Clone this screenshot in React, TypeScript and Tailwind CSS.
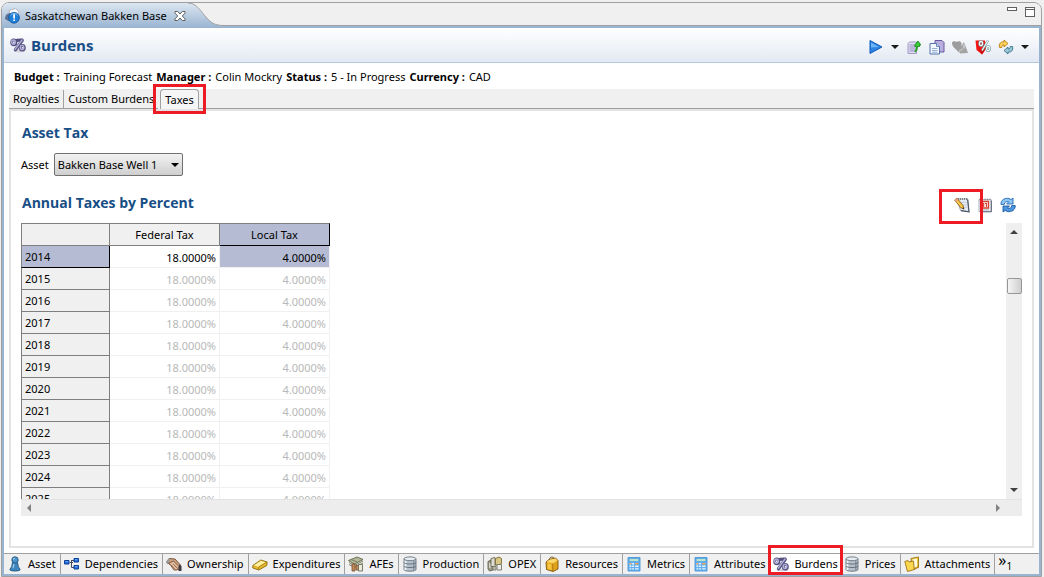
import type { ReactNode } from 'react';

function Svg({ children, className = '' }: { children: ReactNode; className?: string }) {
  return (
    <svg viewBox="0 0 16 16" className={`size-4 shrink-0 ${className}`} aria-hidden="true">
      {children}
    </svg>
  );
}

function PercentIcon() {
  return (
    <Svg>
      <ellipse cx="9.5" cy="14" rx="6" ry="1.5" fill="#d2d2dc" />
      <g fill="none" strokeLinecap="round" stroke="#55507f" strokeWidth="3.200">
        <ellipse cx="3.800" cy="5.400" rx="1.900" ry="2.200" />
        <ellipse cx="12.300" cy="10.800" rx="1.900" ry="2.200" />
        <path d="M12.300 3.300 5.400 12.800" />
        <path d="M7 3.400 11.500 3" />
      </g>
      <g fill="none" stroke="#b4b1dc" strokeWidth="1.400" strokeLinecap="round">
        <ellipse cx="3.500" cy="5.100" rx="1.800" ry="2.100" />
        <ellipse cx="12" cy="10.500" rx="1.800" ry="2.100" />
        <path d="M12 3 5.100 12.300" />
      </g>
      <path d="M3.800 4.600v1.700M12.300 10v1.600" stroke="#fff" strokeWidth="1.100" />
    </Svg>
  );
}

function AssetInfoIcon() {
  return (
    <Svg>
      <path d="M4 2.500 10.500.5l3 2.500v9.500l-7 1z" fill="#f7f8fb" stroke="#a8adba" strokeWidth=".8" />
      <path d="M0 11c0-4 2.500-6.500 6-5.500l1 5-3 3z" fill="#5d7396" />
      <circle cx="9" cy="9.800" r="5.400" fill="#1f7fd6" stroke="#0c56a5" strokeWidth=".8" />
      <path d="M5.500 7.400c1.500-2.500 5.500-2.500 7 0" fill="none" stroke="#7fc0f5" />
      <path d="M8.200 6.300h1.800v4.200h-1.800zM8.200 11.400h1.800v1.600h-1.800z" fill="#fff" />
    </Svg>
  );
}

function CloseIcon() {
  return (
    <Svg>
      <path
        d="M3 3.500h2.700L8 6l2.300-2.500H13v1.700L10.300 8l2.700 2.800v1.700h-2.700L8 10l-2.300 2.500H3v-1.700L5.700 8 3 5.200z"
        fill="#fff"
        stroke="#5f5f5f"
      />
    </Svg>
  );
}

function PlayIcon() {
  return (
    <Svg>
      <path d="M2 1.500 14 8 2 14.500z" fill="#2b83e6" stroke="#1159b4" strokeLinejoin="round" />
      <path d="M3 3.500 11 8 3 8.500z" fill="#6db4f7" />
    </Svg>
  );
}

function ImportIcon() {
  return (
    <Svg>
      <path d="M2 4.500 3.500 3h7v11.500H2z" fill="#e0dcf2" stroke="#9a92bd" strokeWidth=".9" />
      <path d="M3.500 6h5.500M3.500 8h5.500M3.500 10h5.500M3.500 12h5.500" stroke="#8f88bb" strokeWidth=".9" />
      <path d="M9.500 13c1.700-1.500 1.900-3 1.900-5.500h2.200v-1.500h1.200L12 2 8.800 6v1.500h1.500c0 2-.3 3.500-1.600 4.800z" fill="#35cc35" stroke="#128012" strokeWidth=".8" />
    </Svg>
  );
}

function CopyIcon() {
  return (
    <Svg>
      <path d="M6 1.500h7l2 2v9.500H6z" fill="#b9aedd" stroke="#66599f" />
      <path d="M1 4.500h6.500l3 3v7.500H1z" fill="#f4f8ff" stroke="#5573a8" />
      <path d="M7.500 4.500v3h3" fill="#c8d8f0" stroke="#5573a8" strokeWidth=".8" />
      <path d="M3 9.500h5.500M3 11.500h5.500M3 13.200h5.500" stroke="#7f9dcb" strokeWidth=".8" />
    </Svg>
  );
}

function DisabledIcon() {
  return (
    <Svg>
      <path d="M0 4C0 2 3 1.500 4.500 3 6 1.500 9 2 9.500 4v5L7.500 11 7.500 14 3.500 10C1 8 0 6 0 4z" fill="#9c9c9c" />
      <path d="M7.500 10 12 3l4 11-8 .5z" fill="#a3a3a3" />
      <path d="M12 5.500v4M8.500 11.500l2-1.500" stroke="#e5e5e5" />
    </Svg>
  );
}

function RedPercentIcon() {
  return (
    <Svg>
      <path d="M.5 1.500h9.500l1 8-4 6L1.500 11z" fill="#f41414" />
      <path d="M4 10.500 7 15.500l3.500-5z" fill="#d00c0c" />
      <g fill="none" stroke="#6d8f93" strokeWidth="2.300">
        <ellipse cx="6" cy="4.500" rx="1.600" ry="2.200" />
        <ellipse cx="13.200" cy="9.500" rx="1.600" ry="2.200" />
        <path d="M13 1.500 7 11.500" />
      </g>
      <g fill="none" stroke="#f1ffff" strokeWidth="1.200">
        <ellipse cx="6" cy="4.500" rx="1.600" ry="2.200" />
        <ellipse cx="13.200" cy="9.500" rx="1.600" ry="2.200" />
        <path d="M13 1.500 7 11.500" />
      </g>
    </Svg>
  );
}

function SyncIcon() {
  return (
    <Svg>
      <path d="M1.500 8.500c-1-4 1.500-6 4.500-5.500V1l4 3.500L6 8V6C4 5.800 3.500 7 3.800 8.500z" fill="#ffd35c" stroke="#b97f14" strokeWidth=".9" />
      <path d="M14.500 7.500c1 4-1.500 6-4.500 5.500v2l-4-3.500L10 8v2c2 .2 2.500-1 2.200-2.500z" fill="#9cc8d6" stroke="#36748c" strokeWidth=".9" />
    </Svg>
  );
}

function Caret() {
  return (
    <svg viewBox="0 0 8 4" className="h-1 w-2 shrink-0" aria-hidden="true">
      <path d="M0 0h8L4 4z" fill="#1c1c1c" />
    </svg>
  );
}

function EditIcon() {
  return (
    <Svg>
      <path d="M3 2 13.500 1.800 15 14.800 6.500 13.500z" fill="#e4eaf3" stroke="#8a93a1" strokeWidth=".8" />
      <path d="M13.700 2.500 15 14.800 7 13.700" fill="none" stroke="#4d5663" strokeWidth="1.200" />
      <path d="M4.500 1v2M6.500 1v2M8.500 1v2M10.500 1v2M12.500 1v2" stroke="#6e6e6e" strokeWidth=".8" />
      <path d="M7 5.500h5.500M8.500 8H13M10.500 10.500h3" stroke="#b8c4d6" strokeWidth=".7" />
      <path d="M.6 3 3 1.200l6.200 7.500.6 3.300-3-1.300z" fill="#f9bb30" stroke="#80540e" strokeWidth=".8" />
      <path d="M.6 3 3 1.200l1.200 1.500L1.800 4.500z" fill="#e79f9a" />
      <path d="m8.400 11.300 1.500.9-.3-1.900z" fill="#222" />
      <path d="m3 4.300 4.800 5.900" stroke="#fde28a" strokeWidth=".8" />
    </Svg>
  );
}

function CalendarIcon() {
  return (
    <Svg>
      <path d="M2 2.500h12v12H2z" fill="#eef2f8" stroke="#a0a7b2" strokeWidth=".9" />
      <path d="M14.400 3.500v11.300H3" fill="none" stroke="#5f6875" />
      <path d="M3 1.500v2M5.500 1.500v2M8 1.500v2M10.500 1.500v2M13 1.500v2" stroke="#888" strokeWidth=".8" />
      <path d="M4 4.500h7.500v6.500H4z" fill="#fff" stroke="#d6402c" strokeWidth="1.300" />
      <path d="M5.500 6.500h1.200V10M8 6.500h1.500V10" fill="none" stroke="#d6402c" strokeWidth="1.200" />
      <path d="M4 12.900h8" stroke="#aab6c8" />
    </Svg>
  );
}

function RefreshIcon() {
  return (
    <Svg>
      <path d="M1 7.500C.5 3.500 4.500.5 9 1.500l2 1.100L13 1v6H6.700l2-2.100C6.500 4 4.500 5 4.200 7.500z" fill="#8cc6f5" stroke="#2468b2" strokeWidth=".9" strokeLinejoin="round" />
      <path d="M15.200 8.500c.5 4-3.500 7-8 6l-2-1.100L3 15V9h6.500l-2 2.100c2.200.9 4-.1 4.300-2.600z" fill="#4d97de" stroke="#1d5ba5" strokeWidth=".9" strokeLinejoin="round" />
    </Svg>
  );
}

function PawnIcon() {
  return (
    <Svg>
      <path d="M5.500 6.500h5l.8 4 1.900 3.200c0 1.700-10.400 1.700-10.400 0l1.900-3.200z" fill="#3f86bd" stroke="#1d5682" strokeWidth=".9" />
      <circle cx="8" cy="4" r="3.200" fill="#4b93c9" stroke="#1d5682" strokeWidth=".9" />
      <path d="M6.300 3.500c.3-1 1-1.300 1.800-1.300M6 12l1-4" fill="none" stroke="#a9d3f0" strokeWidth="1.100" />
    </Svg>
  );
}

function DependencyIcon() {
  return (
    <Svg>
      <path d="M6 6.500h3M7.500 4v7.500M7.500 4.500H10M7.500 11.500H10" fill="none" stroke="#444d5c" />
      <path d="M.5 4.500h4.500v3.500H.5zM10 2.500h4.500v3.500H10zM10 9.500h4.500V13H10z" fill="#1f6bdc" stroke="#0d3f94" />
      <path d="M1.500 5.700h2.500M11 3.700h2.500M11 10.700h2.500" stroke="#74b0fa" />
    </Svg>
  );
}

function HandshakeIcon() {
  return (
    <Svg>
      <path d="m.5 6 3-3.500L9 3l5.500 6v4.500h-3z" fill="#caa07f" stroke="#6f4a33" strokeWidth=".9" />
      <path d="M3 7 7.500 5l5.500 5.500-2 3.500H8z" fill="#e2bd9f" stroke="#7c5238" strokeWidth=".9" />
      <path d="m5 9 4 4.500M7 7.800l4 4.200" stroke="#7c5238" strokeWidth=".8" />
      <path d="m13 8.500 2.500 1.500v5h-3z" fill="#3b3b42" />
      <path d="m0 6.500 1.500 2L4 4 2.500 2z" fill="#9a9a9a" />
    </Svg>
  );
}

function GoldIcon() {
  return (
    <Svg>
      <path d="m.8 9.500 8-5.500 6.400 2-.4 3.500-8 4.500L.8 12z" fill="#e3b62c" stroke="#8f6c10" strokeWidth=".9" strokeLinejoin="round" />
      <path d="m2 9.300 7-4.500 4.500 1.400-7.300 4.500z" fill="#fdf0a0" />
      <path d="m6.800 11 7.500-4.500" stroke="#a67e16" strokeWidth=".8" />
      <path d="M6.500 11v2.700" stroke="#a67e16" strokeWidth=".8" />
    </Svg>
  );
}

function MoneyIcon() {
  return (
    <Svg>
      <path d="M.5 4.500 9 1l6 2.500L6.500 8z" fill="#b4b89a" stroke="#5f6547" strokeWidth=".9" />
      <path d="m3 3.500 6 2.300M1 6.500l5.500 3L15 5M1 8.500l5.500 3L15 7" fill="none" stroke="#7b7f60" />
      <path d="M4 8h3v7H4zM8 9.500h3V14H8z" fill="#c58c5c" stroke="#734a2a" strokeWidth=".8" />
      <path d="M10.500 8.500h4V15h-4z" fill="#eceada" stroke="#6e6e5c" strokeWidth=".9" />
    </Svg>
  );
}

function DatabaseIcon() {
  return (
    <Svg>
      <path d="M2 3v10.500c0 2.300 12 2.300 12 0V3z" fill="#b6c1cb" stroke="#67747f" strokeWidth=".9" />
      <path d="M3.500 4.500v9.500" stroke="#eff4f8" strokeWidth="1.800" />
      <path d="M11.500 5v10M13 5v9" stroke="#8694a1" />
      <ellipse cx="8" cy="2.800" rx="6" ry="1.900" fill="#e6edf3" stroke="#67747f" strokeWidth=".9" />
      <path d="M2 6.500c0 2 12 2 12 0M2 10c0 2 12 2 12 0" fill="none" stroke="#5d6a76" strokeWidth=".9" />
    </Svg>
  );
}

function OpexIcon() {
  return (
    <Svg>
      <path d="M1 5.500 4 4v4l2 1v5l-3.500 1L1 13z" fill="#9e9c88" stroke="#63614d" strokeWidth=".9" />
      <path d="M4 2.500 8 1.500v9H4z" fill="#dcdcd0" stroke="#6b6a58" strokeWidth=".9" />
      <path d="M8.500 2.500 12 1l2.500 1.500v5L12 9H8.500z" fill="#d8c684" stroke="#7c6c35" strokeWidth=".9" />
      <path d="M10 8.500h4.500v5.500H10z" fill="#ecece6" stroke="#75756a" strokeWidth=".9" />
      <path d="M6 10.500h3V14H6z" fill="#c4c2b2" stroke="#75756a" strokeWidth=".8" />
      <path d="M2.800 7v5" stroke="#eee" />
    </Svg>
  );
}

function SackIcon() {
  return (
    <Svg>
      <path d="M2 6 5 3.500 11.500 2 14 4.500V13l-5 2.500-6.500-2z" fill="#e0a11b" stroke="#7e550b" strokeWidth=".9" strokeLinejoin="round" />
      <path d="m2.500 6 6.300 1.500 4.700-3-2.200-2.100L5.300 3.700z" fill="#f9d768" />
      <path d="M3.500 7.300v5.700l4 1V8.500z" fill="#f7c640" />
      <path d="M5.500 3.500C5.500.5 9.500.5 10 2.300" fill="none" stroke="#6b4a12" />
      <path d="M8.800 7.500v8" stroke="#a57211" strokeWidth=".8" />
    </Svg>
  );
}

function CalculatorIcon() {
  return (
    <Svg>
      <path d="M2 1.500h12v13.500H2z" fill="#62b0f1" stroke="#4a95d8" strokeWidth=".9" />
      <path d="M3.200 2.800h9.600v2.400H3.200z" fill="#d3f5cd" stroke="#4b9ad9" strokeWidth=".6" />
      <path d="M3.500 7h1.800v1.400H3.500zM6.200 7H8v1.400H6.200zM3.500 9.600h1.800V11H3.500zM6.200 9.600H8V11H6.200zM3.500 12.200h1.800v1.400H3.500zM6.200 12.200H8v1.400H6.200zM9.200 9.600h3.300V11H9.200zM9.200 12.200h3.300v1.400H9.200z" fill="#eaf6ff" />
      <path d="M3.500 7h1.800v1.400H3.500zM9.200 7h3.300v1.400H9.200z" fill="#f3a04c" />
    </Svg>
  );
}

function FolderIcon() {
  return (
    <Svg>
      <path d="M7 2.500 14.500 1v10L8 13.500z" fill="#f0c53e" stroke="#9c7410" strokeWidth=".9" />
      <path d="M8.500 3.500 13 2.500v8l-4.500 2z" fill="#fffbe2" />
      <path d="M.8 5.500 4 4.500l1 1.500 4.500-1 .8 8.500-6.800 2z" fill="#fbd64f" stroke="#9c7410" strokeWidth=".9" strokeLinejoin="round" />
      <path d="M10 13.500 15 11l-1-1" fill="#e3a91d" stroke="#9c7410" strokeWidth=".8" />
    </Svg>
  );
}

const bottomTabs = [
  { label: 'Asset', icon: <PawnIcon /> },
  { label: 'Dependencies', icon: <DependencyIcon /> },
  { label: 'Ownership', icon: <HandshakeIcon /> },
  { label: 'Expenditures', icon: <GoldIcon /> },
  { label: 'AFEs', icon: <MoneyIcon /> },
  { label: 'Production', icon: <DatabaseIcon /> },
  { label: 'OPEX', icon: <OpexIcon /> },
  { label: 'Resources', icon: <SackIcon /> },
  { label: 'Metrics', icon: <CalculatorIcon /> },
  { label: 'Attributes', icon: <CalculatorIcon /> },
  { label: 'Burdens', icon: <PercentIcon />, selected: true },
  { label: 'Prices', icon: <DatabaseIcon /> },
  { label: 'Attachments', icon: <FolderIcon /> },
];

const details = [
  ['Budget :', 'Training Forecast'],
  ['Manager :', 'Colin Mockry'],
  ['Status :', '5 - In Progress'],
  ['Currency :', 'CAD'],
];

const years = Array.from({ length: 12 }, (_, i) => 2014 + i);

function TitleBar() {
  return (
    <div className="flex h-[25px] bg-[#f0f0f0]">
      <div className="flex items-center bg-linear-to-b from-[#dce6f1] to-[#99b4d1] pl-[3px]">
        <AssetInfoIcon />
        <span className="ml-1">Saskatchewan Bakken Base</span>
        <button type="button" aria-label="Close" className="ml-[5px]">
          <CloseIcon />
        </button>
      </div>
      <svg viewBox="0 0 36 25" className="h-[25px] w-9 shrink-0 bg-[#f0f0f0]" aria-hidden="true">
        <defs>
          <linearGradient id="tabFade" x1="0" y1="0" x2="0" y2="1">
            <stop offset="0" stopColor="#dce6f1" />
            <stop offset="1" stopColor="#99b4d1" />
          </linearGradient>
        </defs>
        <path d="M0 0C9 0 13 9 18 14 23 20 27 22.500 36 22.500V25H0z" fill="url(#tabFade)" />
        <path d="M0 0C9 0 13 9 18 14 23 20 27 22.500 36 22.500" fill="none" stroke="#a0a0a0" />
      </svg>
      <div className="flex flex-1 flex-col bg-[#99b4d1]">
        <div className="flex h-[23px] items-start justify-end gap-2 border-b border-[#a0a0a0] bg-[#f0f0f0] pt-1 pr-1.5">
          <button type="button" aria-label="Minimize" className="h-1 w-2.5 border border-[#606060] bg-white" />
          <button type="button" aria-label="Maximize" className="size-2.5 border border-t-[3px] border-double border-[#606060] bg-white" />
        </div>
      </div>
    </div>
  );
}

function IconButton({ label, children }: { label: string; children: ReactNode }) {
  return (
    <button type="button" aria-label={label} className="flex items-center">
      {children}
    </button>
  );
}

function Grid() {
  return (
    <div className="mt-2.5 grid min-h-0 flex-1 grid-cols-[minmax(0,1fr)_16px] grid-rows-[minmax(0,1fr)_17px]">
      <div className="overflow-hidden">
        <table className="w-[309px] table-fixed border-separate border-spacing-0">
          <thead>
            <tr className="h-[23px]">
              <th className="w-[89px] border border-[#7f7f7f] bg-[#f0f0f0] p-0" />
              <th className="w-[110px] border-y border-r border-[#7f7f7f] bg-[#f0f0f0] p-0 font-normal">Federal Tax</th>
              <th className="w-[110px] border-y border-r border-t-[#7f7f7f] border-r-black border-b-black bg-[#b5bbd3] p-0 font-normal">
                Local Tax
              </th>
            </tr>
          </thead>
          <tbody>
            {years.map((year, i) => (
              <tr key={year} className="h-[22px]">
                <th
                  className={
                    i === 0
                      ? 'border-x border-b border-r-black border-b-black border-l-[#7f7f7f] bg-[#b5bbd3] p-0 pl-[3px] text-left font-normal'
                      : 'border-x border-b border-[#7f7f7f] bg-[#f0f0f0] p-0 pl-[3px] text-left font-normal'
                  }
                >
                  {year}
                </th>
                <td
                  className={`border-r border-b border-[#f0f0f0] p-0 pt-0.5 pr-[3px] text-right ${i === 0 ? '' : 'text-[#b8b8b8]'}`}
                >
                  18.0000%
                </td>
                <td
                  className={`border-r border-b border-[#f0f0f0] p-0 pt-0.5 pr-[3px] text-right ${i === 0 ? 'bg-[#b5bbd3]' : 'text-[#b8b8b8]'}`}
                >
                  4.0000%
                </td>
              </tr>
            ))}
          </tbody>
        </table>
      </div>
      <div className="flex flex-col items-center bg-[#efefef] pt-[7px] pb-[7px]">
        <svg viewBox="0 0 8 4" className="h-1 w-2" aria-hidden="true">
          <path d="M0 4h8L4 0z" fill="#404040" />
        </svg>
        <div className="mt-11 h-4 w-[15px] rounded-xs border border-[#979797] bg-linear-to-r from-[#f5f5f5] to-[#cfcfcf]" />
        <svg viewBox="0 0 8 4" className="mt-auto h-1 w-2" aria-hidden="true">
          <path d="M0 0h8L4 4z" fill="#404040" />
        </svg>
      </div>
      <div className="flex items-center justify-between border-t border-[#e3e3e3] bg-[#ededed] px-1.5">
        <svg viewBox="0 0 4 8" className="h-2 w-1" aria-hidden="true">
          <path d="M4 0v8L0 4z" fill="#808080" />
        </svg>
        <svg viewBox="0 0 4 8" className="h-2 w-1" aria-hidden="true">
          <path d="M0 0v8l4-4z" fill="#808080" />
        </svg>
      </div>
      <div className="border-t border-[#e3e3e3] bg-[#ededed]" />
    </div>
  );
}

export default function App() {
  return (
    <div className="flex h-screen flex-col bg-[#f0f0f0] pt-0.5 pr-0.5 pl-px font-['Noto_Sans','Segoe_UI',sans-serif] text-[11px] leading-4 text-black">
      <div className="flex min-h-0 flex-1 flex-col overflow-hidden rounded-t-lg border border-[#a0a0a0]">
        <TitleBar />
        <div className="flex min-h-0 flex-1 flex-col border-x-2 border-b-2 border-[#99b4d1] bg-white">
          <header className="flex h-[35px] shrink-0 items-center border-b border-[#b4c8de] bg-linear-to-b from-white to-[#e3e9f3] pr-2.5 pl-1.5">
            <PercentIcon />
            <h1 className="ml-[5px] font-['Open_Sans','Segoe_UI',sans-serif] text-[15px] leading-5 font-bold text-[#174e86]">Burdens</h1>
            <div className="ml-auto flex items-center gap-[7px] pt-1">
              <IconButton label="Run"><PlayIcon /></IconButton>
              <IconButton label="Run options"><Caret /></IconButton>
              <IconButton label="Import"><ImportIcon /></IconButton>
              <IconButton label="Copy"><CopyIcon /></IconButton>
              <IconButton label="Compare"><DisabledIcon /></IconButton>
              <IconButton label="Remove burdens"><RedPercentIcon /></IconButton>
              <IconButton label="Synchronize"><SyncIcon /></IconButton>
              <IconButton label="Synchronize options"><Caret /></IconButton>
            </div>
          </header>

          <dl className="flex shrink-0 gap-1 px-2.5 pt-1.5 pb-1">
            {details.map(([term, value]) => (
              <div key={term} className="flex gap-1">
                <dt className="font-bold">{term}</dt>
                <dd>{value}</dd>
              </div>
            ))}
          </dl>

          <div className="mx-[5px] mb-[5px] flex min-h-0 flex-1 flex-col">
            <nav className="flex h-5 shrink-0 bg-[#f0f0f0]">
              <div className="flex border-b border-[#a0a0a0] pt-px">
                <button type="button" className="border-r border-[#a0a0a0] px-1">Royalties</button>
                <button type="button" className="px-1">Custom Burdens</button>
              </div>
              <div className="relative ml-0.5 flex">
                <button type="button" className="rounded-t-sm border border-b-0 border-[#a0a0a0] bg-[#f5f5f5] px-1">Taxes</button>
                <span className="pointer-events-none absolute -inset-x-[7px] -top-[5px] -bottom-[5px] border-[3px] border-[#ed1c24]" />
              </div>
              <div className="flex-1 border-b border-[#a0a0a0]" />
            </nav>
            <main className="flex min-h-0 flex-1 flex-col border-2 border-[#e3e3e3] px-2.5 pt-3 pb-[30px]">
              <h2 className="pl-px font-['Open_Sans','Segoe_UI',sans-serif] text-[14px] leading-5 font-bold text-[#174e86]">Asset Tax</h2>
              <div className="mt-2.5 flex items-center gap-[5px]">
                <label htmlFor="asset">Asset</label>
                <div className="relative">
                  <select
                    id="asset"
                    className="h-[23px] w-[129px] appearance-none rounded-xs border border-[#707070] bg-linear-to-b from-[#f2f2f2] to-[#cfcfcf] pl-[3px]"
                  >
                    <option>Bakken Base Well 1</option>
                  </select>
                  <span className="pointer-events-none absolute top-[10px] right-1">
                    <svg viewBox="0 0 8 4" className="h-1 w-2" aria-hidden="true">
                      <path d="M0 0h8L4 4z" />
                    </svg>
                  </span>
                </div>
              </div>
              <div className="mt-[17px] flex items-center justify-between">
                <h2 className="pl-px font-['Open_Sans','Segoe_UI',sans-serif] text-[14px] leading-5 font-bold text-[#174e86]">
                  Annual Taxes by Percent
                </h2>
                <div className="flex items-center gap-[7px] pt-[3px] pr-1.5">
                  <div className="relative z-10">
                    <IconButton label="Edit"><EditIcon /></IconButton>
                    <span className="pointer-events-none absolute -top-2 -left-[15px] h-[35px] w-11 border-[3px] border-[#ed1c24]" />
                  </div>
                  <IconButton label="Calendar"><CalendarIcon /></IconButton>
                  <IconButton label="Refresh"><RefreshIcon /></IconButton>
                </div>
              </div>
              <Grid />
            </main>
          </div>

          <nav className="flex h-[21px] shrink-0 border-t border-[#a0a0a0] bg-[#f0f0f0]">
            {bottomTabs.map((tab) => (
              <div key={tab.label} className="relative flex">
                <button
                  type="button"
                  className={`flex items-center gap-[5px] pl-[3px] ${tab.selected ? 'bg-white pr-[3px]' : 'border-r border-[#a0a0a0] pr-1'}`}
                >
                  {tab.icon}
                  {tab.label}
                </button>
                {tab.selected && (
                  <span className="pointer-events-none absolute -inset-x-0.5 -top-[9px] -bottom-px z-10 border-[3px] border-[#ed1c24]" />
                )}
              </div>
            ))}
            <button type="button" aria-label="Show more tabs" className="flex px-[3px]">
              <span className="text-[16px] leading-3">»</span>
              <span className="text-[10px] leading-6">1</span>
            </button>
          </nav>
        </div>
      </div>
    </div>
  );
}
